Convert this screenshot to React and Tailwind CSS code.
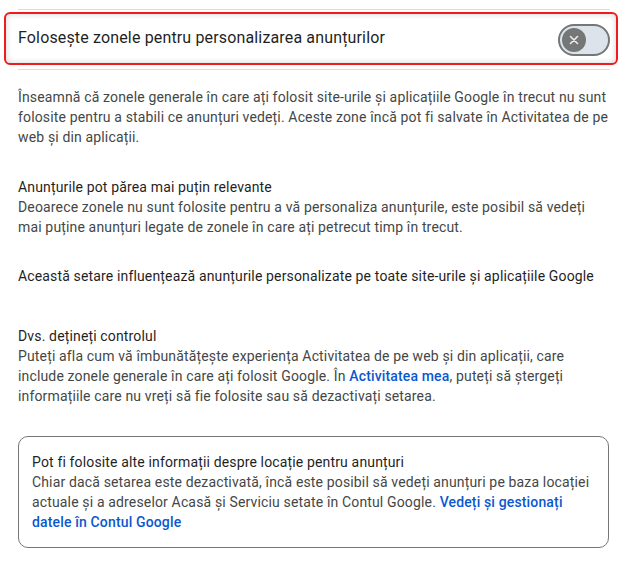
import React from "react";

const link = "text-[#0b57d0] font-medium";

function Toggle() {
  return (
    <div className="w-[52px] h-[32px] rounded-full border-2 border-[#747775] bg-[#dde3ea] flex items-center pl-[2px] shrink-0 mt-[3px]">
      <div className="w-[24px] h-[24px] rounded-full bg-[#747775] flex items-center justify-center">
        <svg width="12" height="12" viewBox="0 0 12 12">
          <path d="M2.5 2.5 L9.5 9.5 M9.5 2.5 L2.5 9.5" stroke="#e9ecef" strokeWidth="1.6" strokeLinecap="round" />
        </svg>
      </div>
    </div>
  );
}

export default function App() {
  return (
    <div
      className="w-[628px] h-[563px] bg-white px-[18px] pt-[9px] text-[14px] leading-[20px] tracking-[0.15px] text-[#444746]"
      style={{ fontFamily: "Roboto, 'Noto Sans', sans-serif" }}
    >
      {/* Ligne du haut */}
      <div className="h-px bg-[#dadce0]" />

      {/* Rangée du paramètre, surlignée en rouge */}
      <div className="ml-[-14px] mr-[-8px] mt-[2px] h-[53px] border-2 border-[#ee1c1c] rounded-[6px] shadow-[inset_0_0_6px_rgba(0,0,0,0.18)] flex items-center justify-between pl-[12px] pr-[6px]">
        <span className="text-[16px] leading-[22px] text-[#1f1f1f] -mt-[1px]">
          Folosește zonele pentru personalizarea anunțurilor
        </span>
        <Toggle />
      </div>

      <div className="h-px bg-[#dadce0] mt-[4px]" />

      <p className="mt-[17px] whitespace-nowrap">
        Înseamnă că zonele generale în care ați folosit site-urile și aplicațiile Google în trecut nu sunt
        <br />
        folosite pentru a stabili ce anunțuri vedeți. Aceste zone încă pot fi salvate în Activitatea de pe
        <br />
        web și din aplicații.
      </p>

      <div className="mt-[30px] whitespace-nowrap">
        <p className="text-[#1f1f1f]">Anunțurile pot părea mai puțin relevante</p>
        <p>
          Deoarece zonele nu sunt folosite pentru a vă personaliza anunțurile, este posibil să vedeți
          <br />
          mai puține anunțuri legate de zonele în care ați petrecut timp în trecut.
        </p>
      </div>

      <p className="mt-[29px] whitespace-nowrap text-[#1f1f1f]">
        Această setare influențează anunțurile personalizate pe toate site-urile și aplicațiile Google
      </p>

      <div className="mt-[40px] whitespace-nowrap">
        <p className="text-[#1f1f1f]">Dvs. dețineți controlul</p>
        <p>
          Puteți afla cum vă îmbunătățește experiența Activitatea de pe web și din aplicații, care
          <br />
          include zonele generale în care ați folosit Google. În <a className={link}>Activitatea mea</a>,
          puteți să ștergeți
          <br />
          informațiile care nu vreți să fie folosite sau să dezactivați setarea.
        </p>
      </div>

      <div className="mt-[30px] w-[591px] border border-[#747775] rounded-[10px] pl-[13px] pt-[15px] pb-[15px] whitespace-nowrap">
        <p className="text-[#1f1f1f]">Pot fi folosite alte informații despre locație pentru anunțuri</p>
        <p>
          Chiar dacă setarea este dezactivată, încă este posibil să vedeți anunțuri pe baza locației
          <br />
          actuale și a adreselor Acasă și Serviciu setate în Contul Google.{" "}
          <a className={link}>Vedeți și gestionați</a>
          <br />
          <a className={link}>datele în Contul Google</a>
        </p>
      </div>
    </div>
  );
}
